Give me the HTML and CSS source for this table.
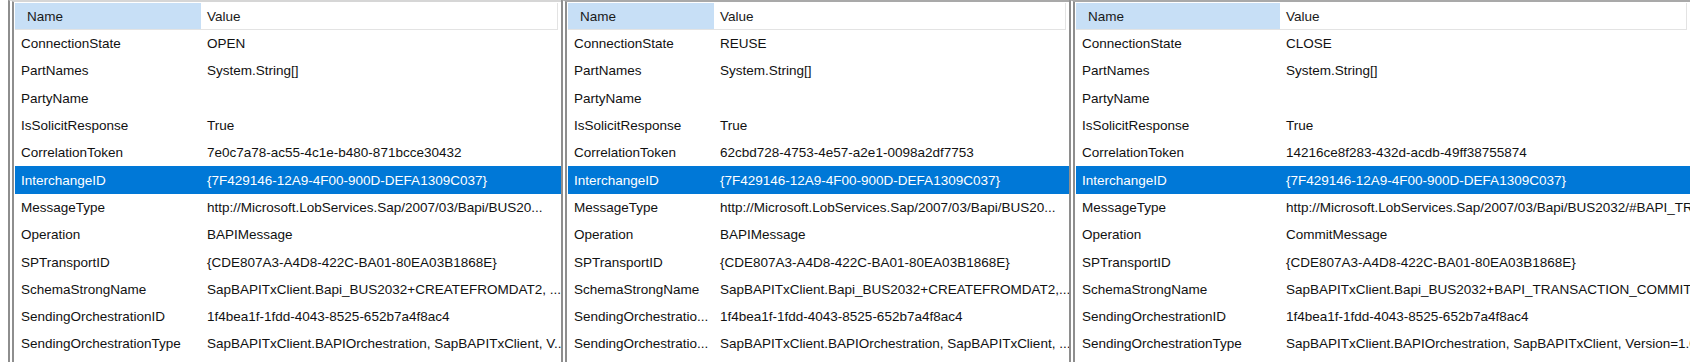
FILE: index.html
```html
<!DOCTYPE html>
<html>
<head>
<meta charset="utf-8">
<link rel="stylesheet" href="styles.css">
</head>
<body>
<div class="wrap">
  <div class="panel p1">
    <div class="row head"><div class="name">Name</div><div class="val">Value</div></div>
    <div class="row"><div class="name">ConnectionState</div><div class="val">OPEN</div></div>
    <div class="row"><div class="name">PartNames</div><div class="val">System.String[]</div></div>
    <div class="row"><div class="name">PartyName</div><div class="val"></div></div>
    <div class="row"><div class="name">IsSolicitResponse</div><div class="val">True</div></div>
    <div class="row"><div class="name">CorrelationToken</div><div class="val">7e0c7a78-ac55-4c1e-b480-871bcce30432</div></div>
    <div class="row sel"><div class="name">InterchangeID</div><div class="val">{7F429146-12A9-4F00-900D-DEFA1309C037}</div></div>
    <div class="row"><div class="name">MessageType</div><div class="val">http://Microsoft.LobServices.Sap/2007/03/Bapi/BUS20...</div></div>
    <div class="row"><div class="name">Operation</div><div class="val">BAPIMessage</div></div>
    <div class="row"><div class="name">SPTransportID</div><div class="val">{CDE807A3-A4D8-422C-BA01-80EA03B1868E}</div></div>
    <div class="row"><div class="name">SchemaStrongName</div><div class="val">SapBAPITxClient.Bapi_BUS2032+CREATEFROMDAT2, ...</div></div>
    <div class="row"><div class="name">SendingOrchestrationID</div><div class="val">1f4bea1f-1fdd-4043-8525-652b7a4f8ac4</div></div>
    <div class="row"><div class="name">SendingOrchestrationType</div><div class="val">SapBAPITxClient.BAPIOrchestration, SapBAPITxClient, V...</div></div>
  </div>
  <div class="panel p2">
    <div class="row head"><div class="name">Name</div><div class="val">Value</div></div>
    <div class="row"><div class="name">ConnectionState</div><div class="val">REUSE</div></div>
    <div class="row"><div class="name">PartNames</div><div class="val">System.String[]</div></div>
    <div class="row"><div class="name">PartyName</div><div class="val"></div></div>
    <div class="row"><div class="name">IsSolicitResponse</div><div class="val">True</div></div>
    <div class="row"><div class="name">CorrelationToken</div><div class="val">62cbd728-4753-4e57-a2e1-0098a2df7753</div></div>
    <div class="row sel"><div class="name">InterchangeID</div><div class="val">{7F429146-12A9-4F00-900D-DEFA1309C037}</div></div>
    <div class="row"><div class="name">MessageType</div><div class="val">http://Microsoft.LobServices.Sap/2007/03/Bapi/BUS20...</div></div>
    <div class="row"><div class="name">Operation</div><div class="val">BAPIMessage</div></div>
    <div class="row"><div class="name">SPTransportID</div><div class="val">{CDE807A3-A4D8-422C-BA01-80EA03B1868E}</div></div>
    <div class="row"><div class="name">SchemaStrongName</div><div class="val">SapBAPITxClient.Bapi_BUS2032+CREATEFROMDAT2,...</div></div>
    <div class="row"><div class="name">SendingOrchestratio...</div><div class="val">1f4bea1f-1fdd-4043-8525-652b7a4f8ac4</div></div>
    <div class="row"><div class="name">SendingOrchestratio...</div><div class="val">SapBAPITxClient.BAPIOrchestration, SapBAPITxClient, ...</div></div>
  </div>
  <div class="panel p3">
    <div class="row head"><div class="name">Name</div><div class="val">Value</div></div>
    <div class="row"><div class="name">ConnectionState</div><div class="val">CLOSE</div></div>
    <div class="row"><div class="name">PartNames</div><div class="val">System.String[]</div></div>
    <div class="row"><div class="name">PartyName</div><div class="val"></div></div>
    <div class="row"><div class="name">IsSolicitResponse</div><div class="val">True</div></div>
    <div class="row"><div class="name">CorrelationToken</div><div class="val">14216ce8f283-432d-acdb-49ff38755874</div></div>
    <div class="row sel"><div class="name">InterchangeID</div><div class="val">{7F429146-12A9-4F00-900D-DEFA1309C037}</div></div>
    <div class="row"><div class="name">MessageType</div><div class="val">http://Microsoft.LobServices.Sap/2007/03/Bapi/BUS2032/#BAPI_TRANSACTION_COMMIT</div></div>
    <div class="row"><div class="name">Operation</div><div class="val">CommitMessage</div></div>
    <div class="row"><div class="name">SPTransportID</div><div class="val">{CDE807A3-A4D8-422C-BA01-80EA03B1868E}</div></div>
    <div class="row"><div class="name">SchemaStrongName</div><div class="val">SapBAPITxClient.Bapi_BUS2032+BAPI_TRANSACTION_COMMIT, SapBAPITxClient</div></div>
    <div class="row"><div class="name">SendingOrchestrationID</div><div class="val">1f4bea1f-1fdd-4043-8525-652b7a4f8ac4</div></div>
    <div class="row"><div class="name">SendingOrchestrationType</div><div class="val">SapBAPITxClient.BAPIOrchestration, SapBAPITxClient, Version=1.0.0.0</div></div>
  </div>
</div>
</body>
</html>
```
FILE: styles.css
```css
html, body {
  margin: 0;
  padding: 0;
  background: #ffffff;
}
body {
  font-family: "Liberation Sans", Arial, sans-serif;
  font-size: 13.5px;
  color: #111;
}
.wrap {
  display: flex;
  padding-left: 8px;
  height: 362px;
  overflow: hidden;
}
.panel {
  border-left: 6px double #8e8e8e;
  border-top: 2px solid #a9a9a9;
  padding-left: 1px;
  padding-top: 1px;
  overflow: hidden;
  box-sizing: border-box;
  height: 362px;
}
.p1 { width: 553px; --name: 186px; border-top-color: #d6d6d6; }
.p2 { width: 508px; --name: 146px; }
.p3 { width: 621px; --name: 204px; }
.row {
  display: flex;
  height: 27.3px;
  align-items: center;
  white-space: nowrap;
}
.name {
  width: var(--name);
  flex: none;
  padding-left: 6px;
  box-sizing: border-box;
  overflow: hidden;
}
.val {
  flex: 1;
  padding-left: 6px;
  overflow: hidden;
  min-width: 0;
}
.head {
  height: 26px;
  border-bottom: 1px solid #e3e3e3;
  margin-bottom: 0;
  margin-right: 3px;
  border-right: 1px solid #e3e3e3;
  color: #1a1a1a;
}
.head .name {
  background: #c7dff6;
  height: 100%;
  display: flex;
  align-items: center;
  padding-left: 12px;
}
.sel {
  background: #0078d7;
  color: #ffffff;
}
```
